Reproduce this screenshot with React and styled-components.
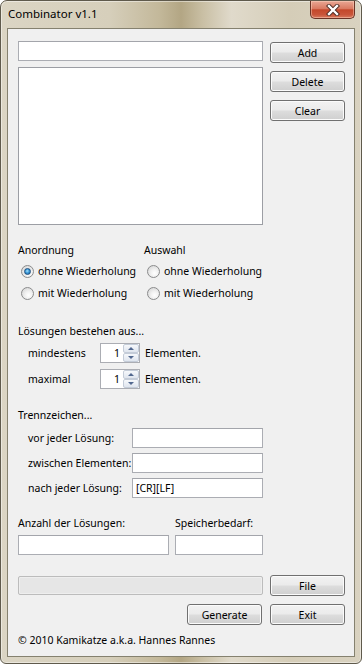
import styled, { createGlobalStyle } from 'styled-components'

const GlobalStyle = createGlobalStyle`
  html, body {
    margin: 0;
    padding: 0;
    background: #ffffff;
  }
  body {
    font-family: "Noto Sans", "DejaVu Sans", sans-serif;
    font-size: 10.5px;
    color: #000;
  }
`;

const Window = styled.div`
    width: 362px;
    height: 664px;
    box-sizing: border-box;
    border: 1px solid #5f5a4c;
    border-radius: 7px 7px 6px 6px;
    background: linear-gradient(90deg, #dbd5c4 0%, #d6cfbb 30%, #c3b89a 44%, #b3a684 50%, #c9bfa4 56%, #e0dacb 64%, #d5cdb8 80%, #d9d2c0 100%);
    padding: 0 6px 6px;
    display: flex;
    flex-direction: column;
    box-shadow: inset 0 0 0 1px rgba(255,255,255,0.45);
`;

const TitleBar = styled.div`
    height: 27px;
    display: flex;
    align-items: flex-start;
`;

const Title = styled.div`
    padding: 5px 0 0 1px;
    font-size: 11.5px;
    line-height: 16px;
`;

const CloseButton = styled.div`
    margin-left: auto;
    width: 45px;
    height: 18px;
    box-sizing: border-box;
    border: 1px solid #6a3326;
    border-top: none;
    border-radius: 0 0 5px 5px;
    background: linear-gradient(#e9a794 0%, #d97a62 45%, #c4482b 52%, #c9553a 80%, #d97a5e 100%);
    box-shadow: inset 0 0 0 1px rgba(255,220,200,0.45);
    display: flex;
    align-items: center;
    justify-content: center;
`;

const Client = styled.div`
    flex: 1;
    background: #f0f0f0;
    border: 1px solid #85816f;
    padding: 12px 9px 0 10px;
    display: flex;
    flex-direction: column;
`;

const TwoCol = styled.div`
    display: grid;
    grid-template-columns: 245px 75px;
    column-gap: 7px;
    align-items: ${p => p.$align || 'start'};
    margin-top: ${p => p.$top || 0}px;
`;

const Column = styled.div`
    display: flex;
    flex-direction: column;
    gap: ${p => p.$gap || 0}px;
    padding-top: ${p => p.$pad || 0}px;
`;

const TextBox = styled.div`
    width: ${p => p.$w ? p.$w + 'px' : 'auto'};
    height: ${p => p.$h || 20}px;
    box-sizing: border-box;
    border: 1px solid #abadb3;
    border-top-color: #a3a5ab;
    background: #fff;
    padding: 0 3px;
    line-height: 18px;
    white-space: nowrap;
`;

const ListBox = styled(TextBox)`
    height: 158px;
    margin-top: 6px;
    border-color: #9c9ea4;
`;

const Button = styled.div`
    width: 75px;
    height: 21px;
    box-sizing: border-box;
    border: 1px solid #707070;
    border-radius: 3px;
    background: linear-gradient(#f2f2f2 0%, #ebebeb 48%, #dddddd 52%, #cfcfcf 100%);
    box-shadow: inset 0 0 0 1px #fbfbfb;
    display: flex;
    align-items: center;
    justify-content: center;
`;

const Options = styled.div`
    display: grid;
    grid-template-columns: 126px 1fr;
    margin-top: 17px;
`;

const Label = styled.div`
    line-height: 16px;
    margin-top: ${p => p.$top || 0}px;
    white-space: nowrap;
`;

const RadioRow = styled.div`
    height: 22px;
    display: flex;
    align-items: center;
    gap: 4px;
    padding-left: 3px;
    margin-top: ${p => p.$top || 0}px;
    white-space: nowrap;
`;

const RadioCircle = styled.span`
    width: 13px;
    height: 13px;
    box-sizing: border-box;
    border-radius: 50%;
    border: 1px solid #8a8b8c;
    background: radial-gradient(circle at 60% 65%, #ffffff 0%, #f2f2f2 35%, #cfcfcf 100%);
    display: flex;
    align-items: center;
    justify-content: center;
    &::after {
        content: '';
        display: ${p => (p.$checked ? 'block' : 'none')};
        width: 7px;
        height: 7px;
        box-sizing: border-box;
        border-radius: 50%;
        border: 1px solid #1d4f7f;
        background: radial-gradient(circle at 45% 40%, #a8e2fb 0%, #3d9ad8 45%, #155f9e 100%);
    }
`;

const SpinRow = styled.div`
    display: flex;
    align-items: center;
    height: 20px;
    padding-left: 10px;
    margin-top: ${p => p.$top || 0}px;
`;

const RowLabel = styled.div`
    width: ${p => p.$w}px;
    flex: none;
    white-space: nowrap;
`;

const Spin = styled.div`
    display: flex;
    width: 40px;
    height: 20px;
    box-sizing: border-box;
    border: 1px solid #abadb3;
    background: #fff;
`;

const SpinValue = styled.div`
    flex: 1;
    text-align: right;
    padding-right: 3px;
    line-height: 18px;
`;

const SpinButtons = styled.div`
    width: 16px;
    display: flex;
    flex-direction: column;
`;

const SpinArrow = styled.div`
    flex: 1;
    box-sizing: border-box;
    border: 1px solid #c4ccd8;
    border-radius: 2px;
    background: linear-gradient(#f6f8fb, #dfe5ee);
    display: flex;
    align-items: center;
    justify-content: center;
    &::after {
        content: '';
        border-left: 3px solid transparent;
        border-right: 3px solid transparent;
        ${p => (p.$down ? 'border-top: 3px solid #52688f;' : 'border-bottom: 3px solid #52688f;')}
    }
`;

const Suffix = styled.div`
    margin-left: 5px;
    white-space: nowrap;
`;

const FieldRow = styled.div`
    display: flex;
    align-items: center;
    padding-left: 10px;
    margin-top: ${p => p.$top || 0}px;
`;

const StatsGrid = styled.div`
    display: grid;
    grid-template-columns: 151px 88px;
    column-gap: 6px;
    row-gap: 4px;
    margin-top: 17px;
`;

const Progress = styled.div`
    height: 19px;
    box-sizing: border-box;
    border: 1px solid #bcbcbc;
    border-radius: 2px;
    background: #e6e6e6;
    box-shadow: inset 0 0 0 1px #eeeeee;
`;

const ButtonRow = styled.div`
    display: flex;
    justify-content: flex-end;
    gap: 8px;
    margin-top: 8px;
`;

const Footer = styled.div`
    line-height: 16px;
    margin-top: 7px;
    white-space: nowrap;
`;

const CloseIcon = () => (
    <svg width="14" height="12" viewBox="0 0 14 12">
        <path d="M3 2 L11 10 M11 2 L3 10" stroke="#4a2a22" strokeWidth="4.2" strokeLinecap="square" />
        <path d="M3 2 L11 10 M11 2 L3 10" stroke="#ffffff" strokeWidth="2.4" strokeLinecap="square" />
    </svg>
);

const Radio = ({ checked, children, top }) => (
    <RadioRow $top={top}>
        <RadioCircle $checked={checked} />
        {children}
    </RadioRow>
);

const Spinner = ({ value }) => (
    <Spin>
        <SpinValue>{value}</SpinValue>
        <SpinButtons>
            <SpinArrow />
            <SpinArrow $down />
        </SpinButtons>
    </Spin>
);

const App = () => {
    const separators = [
        { label: 'vor jeder Lösung:', value: '' },
        { label: 'zwischen Elementen:', value: '' },
        { label: 'nach jeder Lösung:', value: '[CR][LF]' },
    ];
    return (
        <Window>
            <GlobalStyle />
            <TitleBar>
                <Title>Combinator v1.1</Title>
                <CloseButton><CloseIcon /></CloseButton>
            </TitleBar>
            <Client>
                <TwoCol>
                    <Column>
                        <TextBox />
                        <ListBox />
                    </Column>
                    <Column $gap={8} $pad={1}>
                        <Button>Add</Button>
                        <Button>Delete</Button>
                        <Button>Clear</Button>
                    </Column>
                </TwoCol>

                <Options>
                    <Column>
                        <Label>Anordnung</Label>
                        <Radio checked top={2}>ohne Wiederholung</Radio>
                        <Radio>mit Wiederholung</Radio>
                    </Column>
                    <Column>
                        <Label>Auswahl</Label>
                        <Radio top={2}>ohne Wiederholung</Radio>
                        <Radio>mit Wiederholung</Radio>
                    </Column>
                </Options>

                <Label $top={19}>Lösungen bestehen aus...</Label>
                <SpinRow $top={4}>
                    <RowLabel $w={72}>mindestens</RowLabel>
                    <Spinner value="1" />
                    <Suffix>Elementen.</Suffix>
                </SpinRow>
                <SpinRow $top={6}>
                    <RowLabel $w={72}>maximal</RowLabel>
                    <Spinner value="1" />
                    <Suffix>Elementen.</Suffix>
                </SpinRow>

                <Label $top={18}>Trennzeichen...</Label>
                {separators.map(s => (
                    <FieldRow key={s.label} $top={5}>
                        <RowLabel $w={104}>{s.label}</RowLabel>
                        <TextBox $w={131}>{s.value}</TextBox>
                    </FieldRow>
                ))}

                <StatsGrid>
                    <Label>Anzahl der Lösungen:</Label>
                    <Label>Speicherbedarf:</Label>
                    <TextBox />
                    <TextBox />
                </StatsGrid>

                <TwoCol $top={20} $align="center">
                    <Progress />
                    <Button>File</Button>
                </TwoCol>
                <ButtonRow>
                    <Button>Generate</Button>
                    <Button>Exit</Button>
                </ButtonRow>
                <Footer>© 2010 Kamikatze a.k.a. Hannes Rannes</Footer>
            </Client>
        </Window>
    )
}

export default App
